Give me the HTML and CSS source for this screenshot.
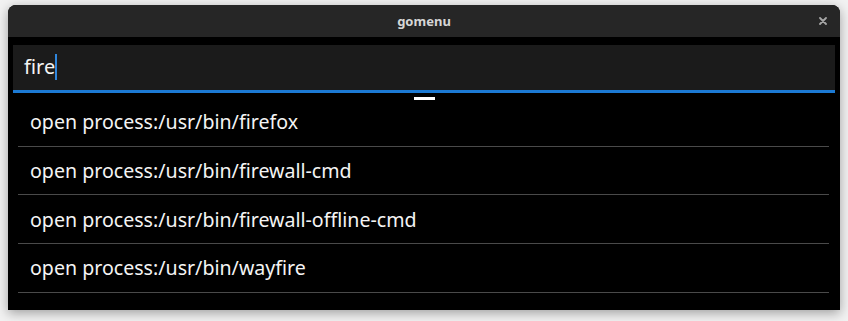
FILE: index.html
```html
<!DOCTYPE html>
<html lang="en">
<head>
    <meta charset="UTF-8">
    <title>gomenu</title>
    <link rel="stylesheet" href="styles.css">
</head>
<body>
    <div class="window">
        <div class="titlebar">
            <span class="title">gomenu</span>
            <svg class="close" width="8" height="8" viewBox="0 0 8 8">
                <path d="M1 1 L7 7 M7 1 L1 7" stroke="#a6a6a6" stroke-width="1.8" stroke-linecap="round"/>
            </svg>
        </div>
        <div class="content">
            <div class="entry">
                <span class="entry-text">fire</span><span class="cursor"></span>
            </div>
            <div class="overshoot"></div>
            <ul class="results">
                <li>open process:/usr/bin/firefox</li>
                <li>open process:/usr/bin/firewall-cmd</li>
                <li>open process:/usr/bin/firewall-offline-cmd</li>
                <li>open process:/usr/bin/wayfire</li>
            </ul>
        </div>
    </div>
</body>
</html>
```

FILE: styles.css
```css
* {
    margin: 0;
    padding: 0;
    box-sizing: border-box;
}

body {
    font-family: "Noto Sans", "Open Sans", sans-serif;
    background: #f2f2f2;
    padding: 5px 8px 0;
    height: 321px;
    overflow: hidden;
}

.window {
    width: 832px;
    height: 305px;
    background: #000;
    border-radius: 8px 8px 0 0;
    box-shadow: 0 3px 12px rgba(0, 0, 0, 0.35);
    overflow: hidden;
    display: flex;
    flex-direction: column;
}

.titlebar {
    height: 32px;
    background: #262626;
    display: flex;
    align-items: center;
    justify-content: center;
    position: relative;
}

.title {
    font-size: 13px;
    font-weight: bold;
    color: #d6d6d6;
}

.close {
    position: absolute;
    right: 13px;
    top: 12px;
}

.content {
    padding: 8px 5px 0;
    display: flex;
    flex-direction: column;
}

.entry {
    height: 48px;
    background: #1b1b1b;
    border-bottom: 3px solid #1c7ad4;
    display: flex;
    align-items: center;
    padding-left: 11px;
    padding-bottom: 2px;
}

.entry-text {
    font-size: 20px;
    color: #f4f4f4;
}

.cursor {
    width: 2px;
    height: 26px;
    background: #2f86dc;
}

.overshoot {
    width: 21px;
    height: 3px;
    background: #fff;
    margin: 4px auto 0;
}

.results {
    list-style: none;
    padding: 0 6px 0 5px;
    margin-top: -2px;
}

.results li {
    height: 48.7px;
    display: flex;
    align-items: center;
    padding-left: 12px;
    font-size: 19.6px;
    color: #f4f4f4;
    border-bottom: 1px solid #4a4a4a;
}
```
